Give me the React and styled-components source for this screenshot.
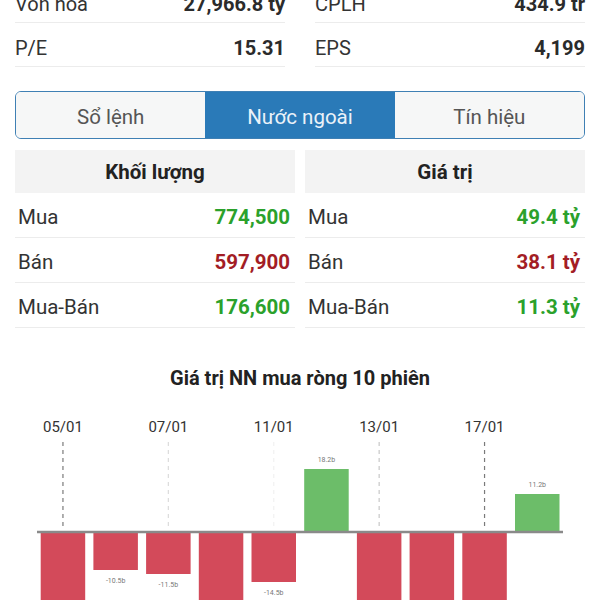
import React from "react";
import styled, { createGlobalStyle } from "styled-components";

// ------------ Variables -------------------
const color_text = "#2b2b2b";
const color_label = "#333";
const color_line = "#ececec";
const color_blue = "#2a7ab8";
const color_green = "#2ba12b";
const color_red = "#a31d25";
const bar_red = "#d34a5a";
const bar_green = "#6cbd69";
// ----- end of Variables -------------------

// --------------- Styles -------------------
const GlobalStyle = createGlobalStyle`
  *, *::before, *::after {
    box-sizing: border-box;
  }
  html, body {
    margin: 0;
    padding: 0;
    background: #fff;
    overflow: hidden;
  }
  body {
    font-family: Roboto, "Noto Sans", "Liberation Sans", sans-serif;
    color: ${color_text};
  }
`;

const Page = styled.div`
  width: 600px;
  margin-top: -21px;
`;

const StatsGrid = styled.div`
  display: grid;
  grid-template-columns: 1fr 1fr;
  column-gap: 30px;
  padding: 0 15px;
`;

const StatRow = styled.div`
  display: flex;
  justify-content: space-between;
  align-items: center;
  height: 44px;
  padding-top: 7px;
  border-bottom: 1px solid ${color_line};
  font-size: 20px;
`;

const Label = styled.span`
  color: ${color_label};
`;

const Value = styled.span`
  font-weight: 700;
  color: ${(p) => p.$color || color_text};
`;

const Tabs = styled.div`
  display: grid;
  grid-template-columns: repeat(3, 1fr);
  margin: 24px 15px 0;
  height: 48px;
  border: 1.5px solid #3f80b4;
  border-radius: 6px;
  overflow: hidden;
`;

const Tab = styled.div`
  display: flex;
  align-items: center;
  justify-content: center;
  padding-top: 3px;
  font-size: 20.5px;
  background: ${(p) => (p.$active ? color_blue : "#f6f7f7")};
  color: ${(p) => (p.$active ? "#eaf2f9" : "#555")};
`;

const ForeignTable = styled.div`
  display: grid;
  grid-template-columns: 1fr 1fr;
  column-gap: 10px;
  margin: 11px 15px 0;
`;

const Column = styled.div`
  display: flex;
  flex-direction: column;
`;

const HeaderCell = styled.div`
  height: 43px;
  display: flex;
  align-items: center;
  justify-content: center;
  padding-top: 1px;
  background: #f3f3f3;
  font-size: 20.5px;
  font-weight: 700;
  color: #222;
`;

const DataRow = styled.div`
  display: flex;
  justify-content: space-between;
  align-items: center;
  height: 45px;
  padding: 3px 5px 0 3px;
  border-bottom: 1px solid ${color_line};
  font-size: 20.5px;
`;

const ChartTitle = styled.div`
  margin-top: 38px;
  text-align: center;
  font-size: 20px;
  line-height: 24px;
  font-weight: 700;
  color: #222;
`;

const ChartSvg = styled.svg`
  display: block;
  width: 600px;
  height: 220px;
`;
// -------- end of Styles -------------------

const stats = [
  ["Vốn hóa", "27,966.8 tỷ", "CPLH", "434.9 tr"],
  ["P/E", "15.31", "EPS", "4,199"],
];

const volume = [
  ["Mua", "774,500", color_green],
  ["Bán", "597,900", color_red],
  ["Mua-Bán", "176,600", color_green],
];

const value = [
  ["Mua", "49.4 tỷ", color_green],
  ["Bán", "38.1 tỷ", color_red],
  ["Mua-Bán", "11.3 tỷ", color_green],
];

// bar heights in px, negative = net sell
const bars = [
  { h: -90 },
  { h: -38, label: "-10.5b" },
  { h: -42, label: "-11.5b" },
  { h: -90 },
  { h: -50, label: "-14.5b" },
  { h: 63, label: "18.2b" },
  { h: -90 },
  { h: -90 },
  { h: -90 },
  { h: 38, label: "11.2b" },
];

const dates = [
  { i: 0, text: "05/01", line: "#7a7a7a" },
  { i: 2, text: "07/01", line: "#dcdcdc" },
  { i: 4, text: "11/01", line: "#f1f1f1" },
  { i: 6, text: "13/01", line: "#c8c8c8" },
  { i: 8, text: "17/01", line: "#7a7a7a" },
];

const AXIS = 142;
const STEP = 52.7;
const BAR_W = 44.5;
const X0 = 40.7;

function NetChart() {
  return (
    <ChartSvg viewBox="0 0 600 220">
      {dates.map((d) => {
        const cx = X0 + d.i * STEP + BAR_W / 2;
        return (
          <g key={d.text}>
            <text
              x={cx}
              y={42}
              textAnchor="middle"
              fontSize="15"
              fill="#333"
              fontFamily="Roboto, sans-serif"
            >
              {d.text}
            </text>
            <line
              x1={cx}
              x2={cx}
              y1={52}
              y2={AXIS - 5}
              stroke={d.line}
              strokeWidth="1.2"
              strokeDasharray="4 4"
            />
          </g>
        );
      })}
      {bars.map((b, i) => {
        const x = X0 + i * STEP;
        const up = b.h > 0;
        const y = up ? AXIS - b.h : AXIS;
        return (
          <g key={i}>
            <rect
              x={x}
              y={y}
              width={BAR_W}
              height={Math.abs(b.h)}
              fill={up ? bar_green : bar_red}
            />
            {b.label && (
              <text
                x={x + BAR_W / 2}
                y={up ? y - 7 : y + Math.abs(b.h) + 13}
                textAnchor="middle"
                fontSize="7"
                fill="#777"
                fontFamily="Roboto, sans-serif"
              >
                {b.label}
              </text>
            )}
          </g>
        );
      })}
      <line x1="37" x2="563" y1={AXIS} y2={AXIS} stroke="#8a8a8a" strokeWidth="2.5" />
    </ChartSvg>
  );
}

export default function App() {
  return (
    <Page>
      <GlobalStyle />

      <StatsGrid>
        {stats.map((r) => (
          <React.Fragment key={r[0]}>
            <StatRow>
              <Label>{r[0]}</Label>
              <Value>{r[1]}</Value>
            </StatRow>
            <StatRow>
              <Label>{r[2]}</Label>
              <Value>{r[3]}</Value>
            </StatRow>
          </React.Fragment>
        ))}
      </StatsGrid>

      <Tabs>
        <Tab>Sổ lệnh</Tab>
        <Tab $active>Nước ngoài</Tab>
        <Tab>Tín hiệu</Tab>
      </Tabs>

      <ForeignTable>
        <Column>
          <HeaderCell>Khối lượng</HeaderCell>
          {volume.map((r) => (
            <DataRow key={r[0]}>
              <Label>{r[0]}</Label>
              <Value $color={r[2]}>{r[1]}</Value>
            </DataRow>
          ))}
        </Column>
        <Column>
          <HeaderCell>Giá trị</HeaderCell>
          {value.map((r) => (
            <DataRow key={r[0]}>
              <Label>{r[0]}</Label>
              <Value $color={r[2]}>{r[1]}</Value>
            </DataRow>
          ))}
        </Column>
      </ForeignTable>

      <ChartTitle>Giá trị NN mua ròng 10 phiên</ChartTitle>
      <NetChart />
    </Page>
  );
}
